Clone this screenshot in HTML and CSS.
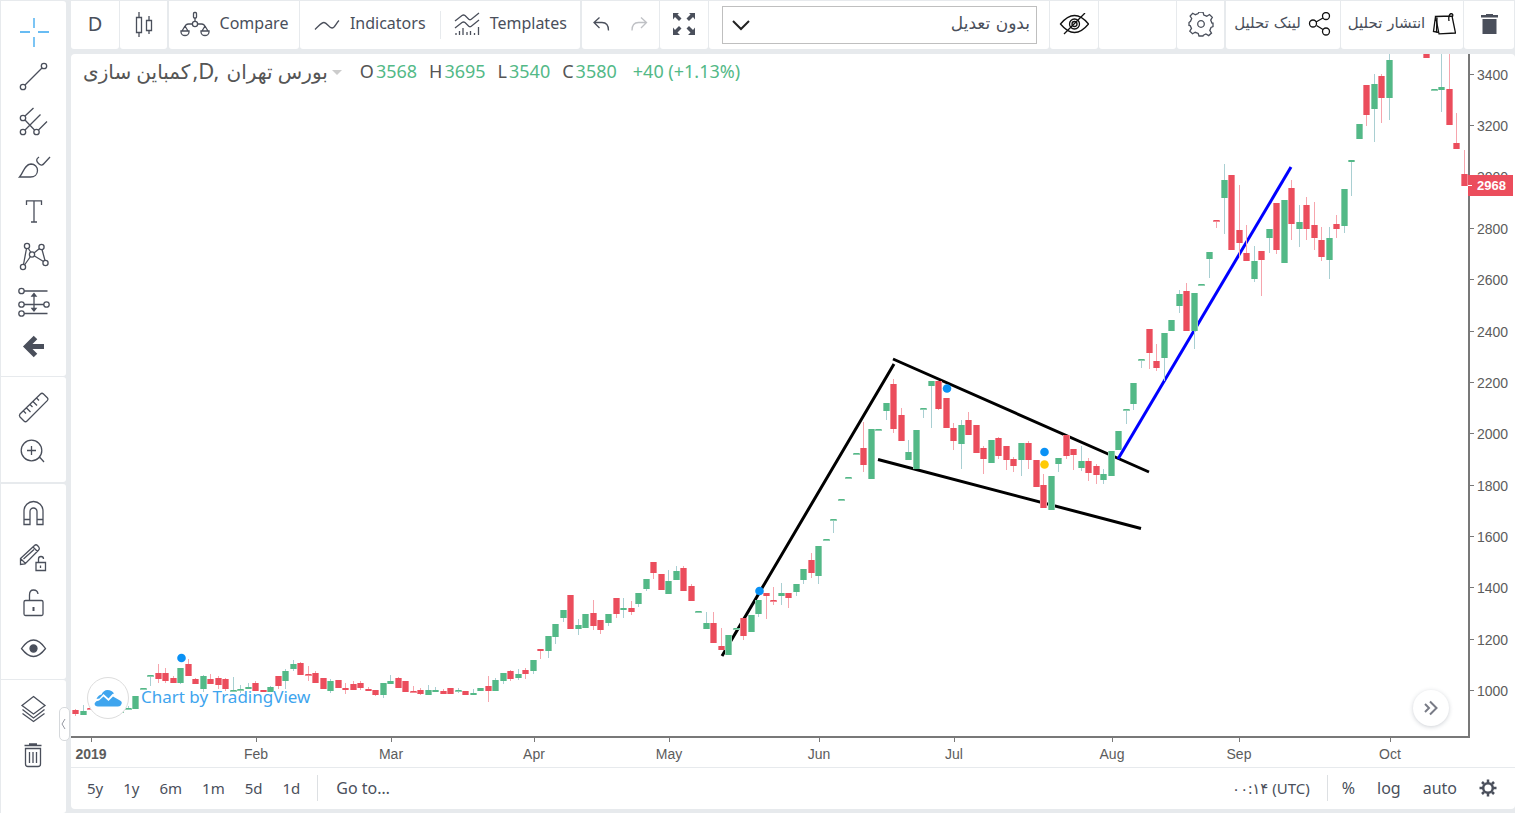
FILE: index.html
```html
<!DOCTYPE html>
<html lang="fa">
<head>
<meta charset="utf-8">
<title>Chart</title>
<meta name="viewport" content="width=device-width, initial-scale=1">
<link rel="stylesheet" href="styles.css">
</head>
<body>
<div class="app">
  <nav class="tools" aria-label="Drawing tools">
    <div class="tool-group first">
      <button class="tool active" aria-label="Cross"><svg viewBox="1 10 65 45"><path d="M34 18v10M34 37v10M20 32h10M38 32h11"/></svg></button>
      <button class="tool" aria-label="Trend line"><svg viewBox="1 55 65 45"><circle cx="44" cy="66" r="2.7"/><circle cx="23" cy="87" r="2.7"/><path d="M25 85L42 68"/></svg></button>
      <button class="tool" aria-label="Pitchfork"><svg viewBox="1 100 65 45"><circle cx="23" cy="118" r="2.7"/><circle cx="23" cy="132" r="2.7"/><circle cx="36.500" cy="132" r="2.7"/><path d="M25 116l8.500-8M25 130l15.500-15.500M38.500 130l8.500-8.500M25 120l9.500 10"/></svg></button>
      <button class="tool" aria-label="Brush"><svg viewBox="1 145 65 45"><path d="M19.500 177C23.500 173 24 164.500 31 164c4 0 6.500 3 6.500 6.500 0 4-3 6.500-7 6.500zM39 157c-3 2-3 4-.5 6.500s4 2 6-.5l5.500-6"/></svg></button>
      <button class="tool" aria-label="Text"><svg viewBox="1 190 65 45"><path d="M26.500 205v-4.200h15v4.200M34 201v21M31 222h6"/></svg></button>
      <button class="tool" aria-label="Pattern"><svg viewBox="1 235 65 45"><circle cx="27" cy="246" r="2.6"/><circle cx="32" cy="254.500" r="2.6"/><circle cx="41.500" cy="247" r="2.6"/><circle cx="45.500" cy="263" r="2.6"/><circle cx="23" cy="267" r="2.6"/><path d="M26.500 248.500l-3 16M28 248l3 4.500M34 253l5.500-4.500M42 249.500l3 11M34.500 256l9 5.500M24.500 265l6-8.500"/></svg></button>
      <button class="tool" aria-label="Prediction"><svg viewBox="1 280 65 45"><circle cx="21.500" cy="291" r="2.7"/><circle cx="21.500" cy="304.500" r="2.7"/><circle cx="46.500" cy="304.500" r="2.7"/><circle cx="21.500" cy="313.500" r="2.7"/><path d="M24 291h23.500M24 304.500h20M24 313.500h23.500M34 295v14"/><path class="solid" d="M32 296l2-2.500 2 2.500zM32 308.500l2 2.500 2-2.500z"/></svg></button>
      <button class="tool" aria-label="Back"><svg viewBox="1 325 65 45"><path class="thick" d="M35.500 337.500l-9 9 9 9M27 346.500h17"/></svg></button>
    </div>
    <div class="tool-group">
      <button class="tool" aria-label="Measure"><svg viewBox="1 384 65 45"><path d="M40.500 394q1.500-1.500 3 0l4 4q1 1.200 0 2.400L27 421q-1.500 1.500-3 0l-4-4q-1.200-1.500 0-3zM23.500 411l2.500 2.500M26.500 408l4 4M30 404.500l2.500 2.500M33 401.500l4 4M36.500 398l2.500 2.500"/></svg></button>
      <button class="tool" aria-label="Zoom in"><svg viewBox="1 429 65 45"><circle cx="31.500" cy="450.500" r="10.300"/><path d="M27 450.500h9M31.500 446v9M38.500 458l1.500-.5 4 4.500"/></svg></button>
    </div>
    <div class="tool-group spaced">
      <button class="tool" aria-label="Magnet"><svg viewBox="1 491 65 45"><path d="M24 524.500V511a9.500 9.500 0 0 1 19 0v13.500h-6V511.500a3.500 3.500 0 0 0-7 0v13zM24 519.500h6M37 519.500h6"/></svg></button>
      <button class="tool" aria-label="Lock drawing mode"><svg viewBox="1 536 65 45"><path d="M20.500 558.500l14-13q1.500-1.500 3 0l1.500 1.800q1 1.500-.5 3L25 564l-4.500.5zM33 547l4.500 4.500M21 559l4.500 4.500M23.500 559l10.500-9.500"/><path d="M36 562.500h9.500v8H36zM38.500 562v-3q0-2.500 2.500-2.500t2.500 2.500M40.500 565.500v2.500"/></svg></button>
      <button class="tool" aria-label="Lock all"><svg viewBox="1 581 65 45"><rect x="24" y="600.500" width="19" height="15" rx="1.500"/><path d="M29.500 600v-5q0-5 4-5t4.500 4"/><path class="mid" d="M33.500 607v4"/></svg></button>
      <button class="tool" aria-label="Hide all"><svg viewBox="1 626 65 45"><path d="M21.500 648.500q12-17 24 0-12 16-24 0z"/><circle class="solid" cx="33.500" cy="648.500" r="3.500"/></svg></button>
    </div>
    <div class="tool-group last">
      <button class="tool" aria-label="Objects"><svg viewBox="1 687 65 45"><path d="M33.500 696.500l11.500 9-11.500 8.500-11.500-8.500zM22.500 709.500l11 8.500 11-8.500M22.500 713.500l11 8 11-8"/></svg></button>
      <button class="tool" aria-label="Remove"><svg viewBox="1 732 65 45"><path d="M25.500 748.500h15V764q0 2.500-2.500 2.500h-10q-2.500 0-2.500-2.500zM29.500 752v11M33 752v11M36.500 752v11M24.500 745.500h17M29 744h8"/></svg></button>
    </div>
    <button class="handle" aria-label="Collapse toolbar"><svg viewBox="0 0 8 12"><path d="M5 1L2 6l3 5"/></svg></button>
  </nav>

  <div class="main">
    <header class="bar">
      <button class="cell w48 interval"><span>D</span></button>
      <button class="cell w47" aria-label="Chart style"><svg width="22" height="28" viewBox="133 11 22 28"><path d="M136.500 17.500h5v15h-5zM139 12v5M139 33v4M146.500 20.500h5v10h-5zM149 16v4M149 30v4"/></svg></button>
      <button class="cell gap w130"><svg width="30" height="28" viewBox="178 11 30 28"><rect x="191.500" y="12.500" width="3" height="5.500" rx="1"/><circle cx="193" cy="24" r="2.600"/><path d="M193 18v3.500M190.500 24h-4q-3 0-3.500 3M195.500 24h4q3 0 3.500 3"/><path d="M183 26l-3 5M183 26l3 5M203 26l-3 5M203 26l3 5M179 31h8v1a4 3.500 0 0 1-8 0zM199 31h8v1a4 3.500 0 0 1-8 0z"/></svg><span>Compare</span></button>
      <div class="cell pair">
        <button class="half"><svg width="26" height="20" viewBox="313 15 26 20"><path d="M314 29.500C318 26 320 22.500 323 22.500S328 28 331 28 335 23 338 20.500"/></svg><span>Indicators</span></button>
        <button class="half ruled"><svg width="26" height="26" viewBox="452 12 26 26"><path d="M453 21l7-5.500q1.500-1 3 0l4 4q1 .5 2 0l8-6.500M453 28l7-5.500q1.500-1 3 0l4 4q1 .5 2 0l8-6.500M454 33v2M457.500 31v4M461 28v7M465 32v3M468.500 31v4M472.500 33v2M476.500 27v8"/></svg><span>Templates</span></button>
      </div>
      <div class="cell gap undo">
        <button class="half" aria-label="Undo"><svg width="20" height="18" viewBox="592 16 20 18"><path d="M600.500 17.500l-5.500 5 5.500 5.500M595 22.500h8q6.500 0 6.500 8"/></svg></button>
        <button class="half off" aria-label="Redo"><svg width="20" height="18" viewBox="629 16 20 18"><path d="M640 17.500l5.500 5-5.500 5.500M645.500 22.500h-8q-6.500 0-6.500 8"/></svg></button>
      </div>
      <button class="cell w48" aria-label="Full screen"><svg class="fill" width="24" height="24" viewBox="672 13 24 24"><path d="M673 12h7l-2.500 2.500 4 4-2.500 2.500-4-4L673 19.500zM695 12h-7l2.500 2.500-4 4 2.500 2.500 4-4 2 2.500zM673 35h7l-2.500-2.500 4-4-2.500-2.500-4 4-2-2.500zM695 35h-7l2.500-2.500-4-4 2.500-2.500 4 4 2-2.500z"/></svg></button>
      <div class="cell adjust">
        <label class="picker"><select dir="rtl" aria-label="تعدیل"><option>بدون تعدیل</option></select><svg class="chevron" width="20" height="14" viewBox="0 0 20 14"><path d="M2 2l8 8 8-8"/></svg></label>
      </div>
      <button class="cell w48" aria-label="Hide"><svg class="ink" width="30" height="24" viewBox="1059 13 30 24"><path d="M1060.500 24q14-17 28 0-14 17-28 0z"/><circle cx="1074.500" cy="24" r="5"/><circle cx="1074.500" cy="24" r="2.500"/><path d="M1064 34l21-21"/></svg></button>
      <div class="cell w77"></div>
      <button class="cell w47" aria-label="Settings"><svg width="26" height="26" viewBox="-13 -12 26 26"><circle r="3.300"/><path d="M-2-12h4l.8 3 3 1.200 2.700-1.700 2.800 2.800-1.600 2.800 1.200 3H12v3.500l-2 .8-1.200 3 1.700 2.700-2.800 2.500-2.800-1.600-2.500 1.200L2 12h-4l-.8-2.500-3-1.200-2.700 1.500-2.700-2.600 1.700-2.800-1.300-2.700L-12 1.500v-3l1.500-1.200 1.200-2.800-1.600-2.500 2.600-2.800 2.700 1.500 2.700-1.200z"/></svg></button>
      <button class="cell gap w114 fa"><span>لینک تحلیل</span><svg class="ink" width="24" height="26" viewBox="1310 12 24 26"><circle cx="1315" cy="23.500" r="3.500"/><circle cx="1328" cy="16" r="3.500"/><circle cx="1328" cy="31.500" r="3.500"/><path d="M1318 22l7-4M1318.500 25.500l6.500 4"/></svg></button>
      <button class="cell w122 fa"><span>انتشار تحلیل</span><svg class="ink" width="24" height="24" viewBox="1432 13 24 24"><path d="M1435.500 16.500l16.500-.5 3.500 17-16.500.800zM1435.500 16.500l-2 15 5.500 1M1449 21q-1-6 2-7.500 3 .5 1 4"/><path d="M1437 17.500l-.5 15"/></svg></button>
      <button class="cell w50" aria-label="Delete"><svg class="fill" width="18" height="22" viewBox="1480 14 18 22"><path d="M1486 14h7v1h5v2.500h-17V15h5zM1482.500 19h14v15h-14z"/></svg></button>
    </header>

    <section class="chart">
      <div class="plot">
        <svg class="canvas" viewBox="71 54 1444 713" preserveAspectRatio="xMinYMin meet" role="img" aria-label="Price chart">
          <g class="trend">
            <path d="M722 656L894 364M893 359L1149 472M878 459.500L1141 528.500"/>
            <path class="blue" d="M1118 459L1291 167"/>
          </g>
          <g id="candles"></g>
          <g class="marks"><circle cx="181.500" cy="658" r="4.300"/><circle cx="759.500" cy="591" r="4.300"/><circle cx="947" cy="388.500" r="4.300"/><circle cx="1044.500" cy="452" r="4.300"/><circle class="gold" cx="1044.500" cy="464.500" r="4.300"/></g>
          <path class="axis" d="M71 737h1398M1469 54v684"/>
          <g id="labels"></g>
          <rect class="tag" x="1468" y="175" width="45" height="21"/>
          <path class="tagtick" d="M1468 185.500h4"/>
          <text class="tagtext" x="1477" y="190">2968</text>
        </svg>
        <div class="legend">
          <span class="symbol">کمباین سازی<b>,D,</b> بورس تهران</span><i class="caret"></i>
          <span class="val">O<em>3568</em></span><span class="val">H<em>3695</em></span><span class="val">L<em>3540</em></span><span class="val">C<em>3580</em></span><span class="val change"><em>+40 (+1.13%)</em></span>
        </div>
        <a class="brand" href="#"><span class="disc"><svg width="28" height="18" viewBox="0 0 28 18"><path d="M4 17.500Q0 17 .8 14q1-2.500 4.200-2.500l4.500-4 5 4.500 4.500-4.500 7 4q2.500 1 1.500 3.500-.8 2.500-3.500 2.500z"/><path d="M2.500 10Q4 6 7.500 5.500q2-4.500 6-4.500 4.500 0 6.500 3.500L18.500 5l-4 4.500L9.500 5l-4 4.500z"/></svg></span><span class="by">Chart by TradingView</span></a>
        <button class="latest" aria-label="Scroll to the most recent bar"><svg width="16" height="16" viewBox="0 0 16 16"><path d="M2 4l4 4-4 4M7 1.500L13.500 8 7 14.500"/></svg></button>
      </div>
      <footer class="foot">
        <div class="ranges"><button>5y</button><button>1y</button><button>6m</button><button>1m</button><button>5d</button><button>1d</button></div>
        <button class="goto">Go to…</button>
        <div class="scale"><button class="clock">۰۰:۱۴ (UTC)</button><button>%</button><button>log</button><button>auto</button><button aria-label="Scale settings"><svg width="18" height="18" viewBox="-9 -9 18 18"><circle class="ring" r="4.800"/><path class="teeth" d="M0-8.500V-5M0 8.500V5M-8.500 0H-5M8.500 0H5M-6-6l2 2M6 6L4 4M-6 6l2-2M6-6L4-4"/></svg></button></div>
      </footer>
    </section>
  </div>
</div>
<script src="chart.js"></script>
</body>
</html>
```
FILE: styles.css
```css
* { box-sizing: border-box; }
body { margin: 0; background: #e7eaed; color: #4a4f5b; font-family: "Noto Sans", "DejaVu Sans", sans-serif; }
button { margin: 0; padding: 0; border: 0; background: none; color: inherit; font: inherit; cursor: pointer; white-space: nowrap; }
svg { display: block; flex: none; fill: none; stroke: #4a4f5b; stroke-width: 1.3px; }
.app { display: flex; gap: 5px; min-height: 100vh; padding: 1px 0 0 1px; }

.tools { position: relative; display: flex; flex-direction: column; gap: 1px; width: 65px; flex: none; }
.tool-group { background: #fff; border-radius: 0 3px 3px 0; padding: 7px 0 8px; }
.tool-group.first { padding: 9px 0 6px; }
.tool-group.spaced { margin-top: 1px; }
.tool-group.last { flex: 1; }
.tool { display: block; width: 100%; height: 45px; }
.tool svg { width: 65px; height: 45px; }
.tool .solid { fill: #4a4f5b; }
.tool .thick { stroke-width: 5px; }
.tool .mid { stroke-width: 2px; }
.tool.active svg { stroke: #37a6ef; }
.handle { position: absolute; right: -4px; bottom: 72px; width: 11px; height: 34px; background: #fff; border: 1px solid #d6d9dc; border-radius: 5px; }
.handle svg { width: 8px; height: 12px; stroke: #9598a1; stroke-width: 1px; }

.main { flex: 1; min-width: 0; display: flex; flex-direction: column; gap: 5px; }
.bar { display: flex; gap: 1px; height: 48px; padding-right: 1px; font-size: 17px; }
.bar span { padding-bottom: 4px; }
.cell { display: flex; align-items: center; justify-content: center; gap: 10px; background: #fff; border-radius: 0 0 3px 3px; flex: none; }
.cell.gap { margin-left: 1px; }
.w47 { width: 47px; } .w48 { width: 48px; } .w50 { width: 50px; } .w77 { width: 77px; }
.w114 { width: 114px; } .w122 { width: 122px; } .w130 { width: 130px; font-size: 16px; }
.interval { font-size: 20px; }
.pair { width: 280px; gap: 0; font-size: 16px; }
.half { flex: 1; display: flex; align-items: center; justify-content: center; gap: 10px; height: 28px; }
.ruled { border-left: 1px solid #e7eaed; }
.undo { width: 77px; gap: 0; }
.off { opacity: .35; }
.fill { fill: #4a4f5b; stroke: none; }
.ink { stroke: #111; }
.adjust { flex: 1; padding: 5px 12px 5px 13px; }
.picker { position: relative; flex: 1; display: flex; }
.picker select { appearance: none; width: 100%; height: 38px; margin: 0; padding: 0 6px 4px; border: 1px solid #bfbfbf; border-radius: 0; background: #fff; color: #4a4f5b; font-family: "DejaVu Sans", sans-serif; font-size: 17px; }
.chevron { position: absolute; left: 9px; top: 13px; stroke: #222; stroke-width: 2px; pointer-events: none; }
.cell.fa { font-family: "DejaVu Sans", sans-serif; font-size: 15px; gap: 7px; }

.chart { flex: 1; display: flex; flex-direction: column; margin-bottom: 4px; background: #fff; border-radius: 4px; overflow: hidden; }
.plot { position: relative; flex: 1; min-height: 0; }
.canvas { width: 100%; height: 100%; stroke: none; }
.trend { stroke: #000; stroke-width: 3px; }
.trend .blue { stroke: #00f; }
.up { fill: #53b987; } .down { fill: #eb4d5c; }
.edge-up { fill: #8fceb0; } .edge-down { fill: #f28b95; }
.wick-up { fill: #a9cfd2; } .wick-down { fill: #f6a5ad; }
.marks { fill: #0a91f5; } .marks .gold { fill: #ffcb05; }
.axis { stroke: #787878; stroke-width: 2px; }
.tick { stroke: #787878; stroke-width: 1px; }
.label { fill: #5c5c5c; font: 14px "Liberation Sans", sans-serif; }
.label.bold { font-weight: bold; }
.middle { text-anchor: middle; }
.tag { fill: #eb4d5c; } .tagtick { stroke: #fff; stroke-width: 1px; }
.tagtext { fill: #fff; font: bold 13px "Liberation Sans", sans-serif; }
.legend { position: absolute; left: 12px; top: 5px; display: flex; align-items: center; height: 24px; font-size: 18px; color: #555; white-space: nowrap; }
.symbol { font-size: 20px; padding-bottom: 2px; }
.symbol b { font-weight: normal; font-size: 22px; margin: 0 2px; }
.caret { border: 5px solid transparent; border-top-color: #ccc; border-bottom: 0; margin: 2px 18px 0 4px; }
.val { margin-right: 12px; }
.change { margin-left: 2px; }
.val em { font-style: normal; color: #53b987; margin-left: 2px; }
.brand { position: absolute; left: 16px; bottom: 48px; display: flex; align-items: center; gap: 12px; color: #3fa5ee; font-size: 17px; text-decoration: none; }
.by { padding-bottom: 3px; }
.disc { display: flex; align-items: center; justify-content: center; width: 42px; height: 42px; border: 1px solid #ddd; border-radius: 50%; background: #fff; }
.disc svg { fill: #3fa5ee; stroke: none; }
.latest { position: absolute; right: 66px; bottom: 41px; width: 36px; height: 36px; display: flex; align-items: center; justify-content: center; border-radius: 50%; background: #fff; box-shadow: 0 1px 4px rgba(60, 70, 90, .25); }
.latest svg { stroke: #787b86; stroke-width: 2px; }

.foot { display: flex; align-items: center; height: 42px; border-top: 1px solid #e7eaed; padding: 0 18px 1px 16px; font-size: 15px; flex: none; }
.ranges { display: flex; gap: 20px; padding-right: 17px; height: 26px; border-right: 1px solid #dde0e3; }
.goto { margin-left: 18px; font-size: 16px; }
.scale { display: flex; align-items: center; gap: 22px; margin-left: auto; font-size: 16px; }
.clock { height: 26px; padding-right: 17px; margin-right: -8px; border-right: 1px solid #dde0e3; font-size: 15px; }
.ring { stroke-width: 2.500px; } .teeth { stroke-width: 2.500px; }
```
FILE: chart.js
```js
// Each bar: [slot, high, top, bottom, low, direction]
const bars = [
[0,709,710,714,716,0],[1,705,711,715,715,1],[2,707,708,709,709,0],[6,710,711,712,712,1],[7,706,708,709,709,1],[8,696,696,709,709,1],[9,688,688,689,689,1],
[10,675,675,676,686,1],[11,664,673,679,683,0],[12,668,673,681,683,0],[13,676,678,683,683,0],[14,668,668,683,684,1],[15,659,664,676,676,0],[16,678,679,684,684,0],
[17,675,676,689,692,1],[18,674,679,684,684,0],[19,676,678,685,689,0],[20,678,679,689,691,0],[21,677,690,691,691,1],[22,685,689,690,693,1],[23,683,687,689,689,1],
[24,681,683,691,691,0],[25,690,690,692,692,0],[26,686,687,692,692,1],[27,676,676,686,689,0],[28,669,671,681,689,1],[29,660,664,669,671,1],[30,662,663,675,675,0],
[31,666,674,675,681,0],[32,671,673,683,683,0],[33,678,678,689,689,0],[34,679,681,691,693,1],[35,680,680,688,688,0],[36,683,688,690,694,0],[37,681,684,690,690,0],
[38,681,683,688,690,0],[39,687,689,691,691,0],[40,690,690,695,696,0],[41,683,683,695,698,1],[42,675,681,684,684,1],[43,677,678,688,688,0],[44,681,681,692,692,0],
[45,686,691,692,692,0],[46,688,690,694,695,0],[47,685,690,695,695,1],[48,687,690,692,692,1],[49,689,691,694,694,0],[50,688,688,694,694,0],[51,688,690,691,693,1],
[52,691,691,695,695,0],[53,689,693,695,695,1],[54,688,688,691,691,1],[55,676,686,691,702,0],[56,678,680,691,691,1],[57,673,673,681,684,1],[58,670,671,679,681,0],
[59,669,674,678,680,1],[60,668,670,674,679,0],[61,660,660,671,674,1],[62,649,649,651,659,0],[63,636,636,651,658,1],[64,624,624,637,644,1],[65,610,610,618,622,1],
[66,595,595,629,629,0],[67,619,625,629,635,1],[68,614,614,628,628,1],[69,600,613,626,630,0],[70,620,620,630,634,0],[71,614,614,623,626,1],[72,598,598,614,618,0],
[73,598,608,610,618,1],[74,601,608,612,615,0],[75,593,593,604,607,1],[76,579,579,589,591,1],[77,562,562,573,579,0],[78,574,574,590,590,0],[79,570,581,594,594,1],
[80,566,571,580,580,1],[81,566,568,591,591,0],[82,584,586,601,601,0],[83,611,611,612,612,1],[84,612,623,629,629,1],[85,612,623,643,643,0],[86,628,646,650,650,0],
[87,635,635,655,655,1],[88,628,628,629,629,1],[89,618,618,636,640,0],[90,615,615,632,632,1],[91,600,600,614,617,1],[92,593,593,596,619,0],[93,587,600,601,605,0],
[94,583,593,596,605,1],[95,593,593,598,608,0],[96,584,584,592,596,1],[97,569,569,580,584,1],[98,553,560,573,578,0],[99,546,546,576,584,1],[100,539,539,540,540,1],
[101,519,519,520,533,1],[102,499,499,500,500,1],[103,477,477,478,478,1],[104,453,453,454,454,1],[105,422,448,465,472,0],[106,429,429,479,479,1],[107,429,429,430,430,1],
[108,403,403,411,420,1],[109,379,384,429,433,0],[110,408,415,441,441,0],[111,440,452,460,460,1],[112,430,430,469,469,1],[113,408,408,409,418,1],[114,381,381,386,428,1],
[115,381,381,409,410,0],[116,398,398,428,428,0],[117,423,428,441,450,0],[118,420,425,444,469,1],[119,412,420,435,435,0],[120,425,425,453,453,0],[121,446,448,459,474,0],
[122,440,440,463,463,1],[123,437,438,456,459,0],[124,446,446,460,470,0],[125,457,459,466,472,0],[126,443,443,460,476,1],[127,441,443,460,469,0],[128,460,460,487,487,0],
[129,474,485,508,508,0],[130,476,476,510,510,1],[131,458,458,464,472,1],[132,435,435,456,459,0],[133,449,449,455,470,0],[134,446,461,468,471,1],[135,458,461,473,481,0],
[136,464,466,475,484,0],[137,469,474,480,484,1],[138,451,451,476,476,1],[139,431,431,450,450,1],[140,409,409,410,424,1],[141,383,383,404,410,1],[142,359,359,360,368,1],
[143,329,329,353,369,0],[144,344,361,368,371,0],[145,333,333,358,381,1],[146,320,320,331,331,1],[147,290,294,306,313,1],[148,283,291,331,331,0],[149,293,293,331,349,1],
[150,284,284,285,285,1],[151,252,252,259,278,1],[152,220,220,221,228,0],[153,164,180,198,234,1],[154,175,175,250,250,0],[155,185,230,243,257,0],[156,225,253,261,261,0],
[157,246,261,279,282,1],[158,251,251,260,296,0],[159,229,229,238,253,1],[160,203,203,250,254,0],[161,200,200,263,263,1],[162,180,188,224,240,0],[163,205,222,229,247,1],
[164,197,205,229,240,0],[165,202,225,238,250,0],[166,227,240,257,261,0],[167,227,238,260,279,1],[168,215,224,229,238,0],[169,189,189,226,233,1],[170,160,160,162,196,1],
[171,124,124,139,139,1],[172,85,85,115,126,0],[173,74,84,109,142,1],[174,74,76,98,123,0],[175,50,60,98,120,1],[180,50,50,58,58,0],[181,89,89,90,90,1],
[182,50,87,90,112,1],[183,50,89,125,125,0],[184,113,143,149,149,0],[185,150,174,186,186,0]
];
const NS = "http://www.w3.org/2000/svg";
function add(parent, name, attrs, text) {
  const el = document.createElementNS(NS, name);
  for (const k in attrs) el.setAttribute(k, attrs[k]);
  if (text) el.textContent = text;
  parent.appendChild(el);
}
const g = document.getElementById("candles");
for (const [slot, high, top, bottom, low, up] of bars) {
  const x = Math.round(75 + slot * 7.507), dir = up ? "up" : "down";
  const thin = bottom - top < 2;
  if (low > high) add(g, "rect", { x, y: high, width: 1, height: low - high, class: "wick-" + dir });
  add(g, "rect", { x: x - 3, y: top, width: 7, height: thin ? 2 : bottom - top, class: "edge-" + dir });
  add(g, "rect", { x: x - 2, y: top, width: 5, height: thin ? 1 : bottom - top, class: dir });
}
const labels = document.getElementById("labels");
for (let price = 1000, y = 691; price <= 3400; price += 200, y -= 51.35) {
  const py = Math.round(y);
  add(labels, "path", { d: `M1470 ${py - 0.5}h4`, class: "tick" });
  add(labels, "text", { x: 1477, y: py + 5, class: "label" }, String(price));
}
const months = [["2019", 91], ["Feb", 256], ["Mar", 391], ["Apr", 534], ["May", 669], ["Jun", 819], ["Jul", 954], ["Aug", 1112], ["Sep", 1239], ["Oct", 1390]];
months.forEach(([name, x], i) => {
  add(labels, "path", { d: `M${x + 0.5} 738v4`, class: "tick" });
  add(labels, "text", { x, y: 759, class: "label middle" + (i ? "" : " bold") }, name);
});
```
